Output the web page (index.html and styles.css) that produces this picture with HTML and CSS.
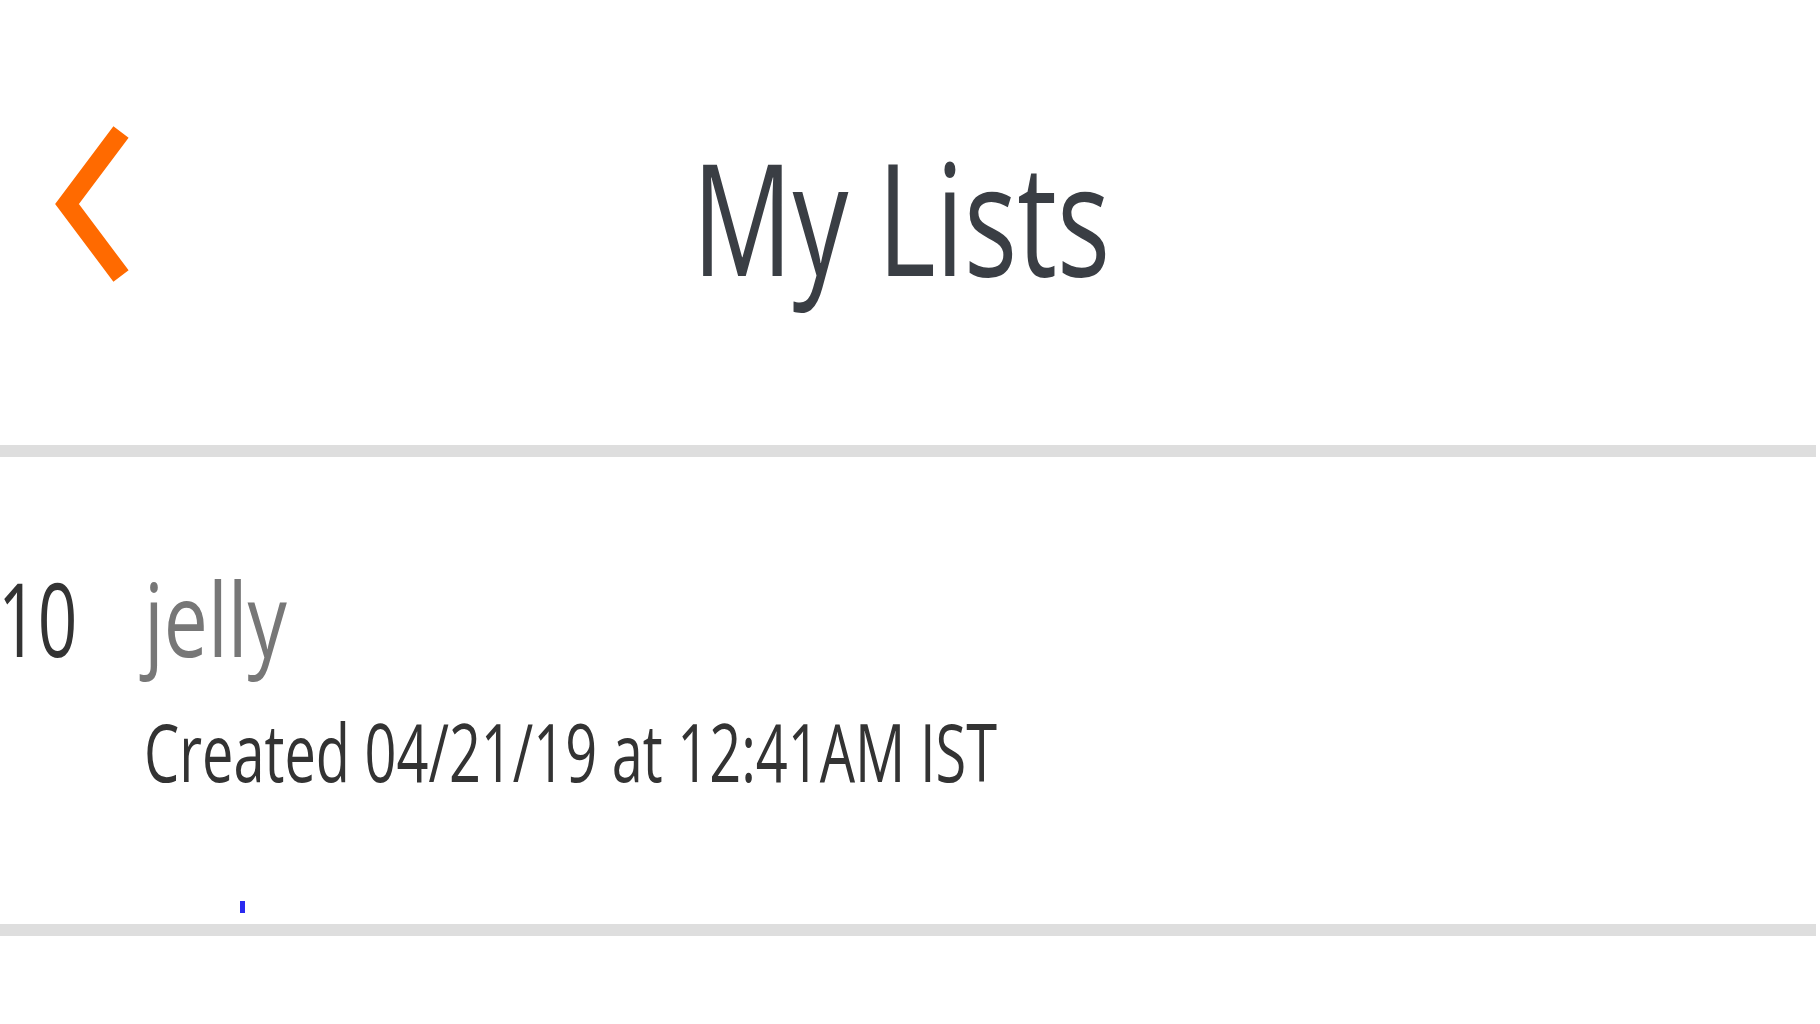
FILE: index.html
```html
<!DOCTYPE html>
<html lang="en">
<head>
  <meta charset="UTF-8">
  <title>My Lists</title>
  <link rel="stylesheet" href="styles.css">
</head>
<body>
  <header class="topbar">
    <a class="back" href="#" aria-label="Back">
      <svg width="80" height="170" viewBox="0 0 80 170">
        <path d="M66 6 L12 78 L66 150" fill="none" stroke="#ff6a00" stroke-width="19" stroke-linejoin="miter"/>
      </svg>
    </a>
    <h1 class="title">My Lists</h1>
    <span></span>
  </header>

  <ul class="lists">
    <li class="list-item">
      <span class="list-id">10</span>
      <div class="list-body">
        <div class="list-name">jelly</div>
        <div class="list-meta">Created 04/21/19 at 12:41AM IST</div>
        <span class="caret"></span>
      </div>
    </li>
  </ul>
</body>
</html>
```

FILE: styles.css
```css
body { margin: 0; background: #fff; font-family: "Open Sans", "Noto Sans", sans-serif; color: #333; }
.topbar { display: grid; grid-template-columns: 1fr auto 1fr; height: 445px; width: 1816px; border-bottom: 12px solid #dedede; }
.back { display: block; padding: 126px 0 0 55px; }
.back svg { display: block; }
.title { margin: 0 14px 0 0; padding-top: 138px; font-size: 155px; line-height: 1; font-weight: 400; color: #3a3e44; transform: scaleX(0.72); transform-origin: 50% 0; }
.lists { list-style: none; margin: 0; padding: 0; }
.list-item { display: flex; align-items: baseline; width: 1816px; height: 479px; box-sizing: border-box; padding-top: 100px; border-bottom: 12px solid #dedede; }
.list-id { flex: none; width: 146px; margin-left: -2px; font-size: 102px; line-height: 1.2; transform: scaleX(0.68); transform-origin: 0 50%; }
.list-body { flex: 1; }
.list-name { font-size: 102px; line-height: 1.2; color: #777; transform: scaleX(0.77); transform-origin: 0 50%; }
.list-meta { margin-top: 23px; font-size: 81px; line-height: 1.2; color: #333; transform: scaleX(0.69); transform-origin: 0 50%; }
.caret { display: block; width: 5px; height: 12px; margin: 101px 0 0 96px; background: #2a2af0; }
```
